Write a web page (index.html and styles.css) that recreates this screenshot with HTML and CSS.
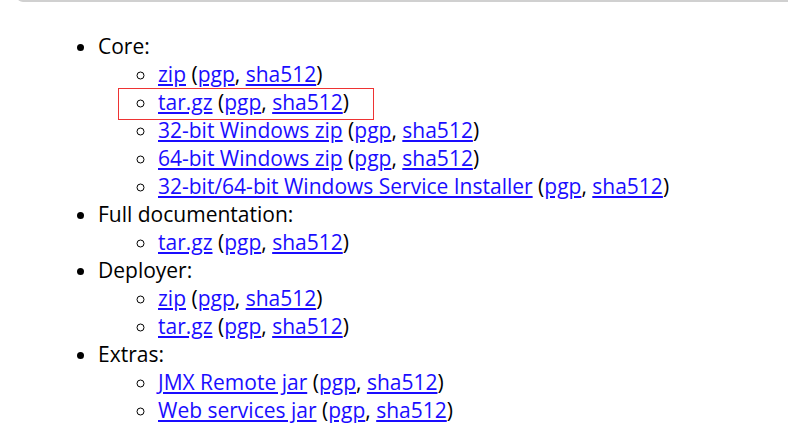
FILE: index.html
```html
<!DOCTYPE html>
<html>
<head>
<meta charset="utf-8">
<link rel="stylesheet" href="styles.css">
</head>
<body>
<div class="panel"></div>
<ul class="outer">
  <li>Core:
    <ul class="inner">
      <li><a href="#">zip</a> (<a href="#">pgp</a>, <a href="#">sha512</a>)</li>
      <li class="marked"><a href="#">tar.gz</a> (<a href="#">pgp</a>, <a href="#">sha512</a>)<span class="highlight"></span></li>
      <li><a href="#">32-bit Windows zip</a> (<a href="#">pgp</a>, <a href="#">sha512</a>)</li>
      <li><a href="#">64-bit Windows zip</a> (<a href="#">pgp</a>, <a href="#">sha512</a>)</li>
      <li><a href="#">32-bit/64-bit Windows Service Installer</a> (<a href="#">pgp</a>, <a href="#">sha512</a>)</li>
    </ul>
  </li>
  <li>Full documentation:
    <ul class="inner">
      <li><a href="#">tar.gz</a> (<a href="#">pgp</a>, <a href="#">sha512</a>)</li>
    </ul>
  </li>
  <li>Deployer:
    <ul class="inner">
      <li><a href="#">zip</a> (<a href="#">pgp</a>, <a href="#">sha512</a>)</li>
      <li><a href="#">tar.gz</a> (<a href="#">pgp</a>, <a href="#">sha512</a>)</li>
    </ul>
  </li>
  <li>Extras:
    <ul class="inner">
      <li><a href="#">JMX Remote jar</a> (<a href="#">pgp</a>, <a href="#">sha512</a>)</li>
      <li><a href="#">Web services jar</a> (<a href="#">pgp</a>, <a href="#">sha512</a>)</li>
    </ul>
  </li>
</ul>
</body>
</html>
```
FILE: styles.css
```css
html, body {
  margin: 0;
  padding: 0;
  background: #fff;
  overflow: hidden;
}
body {
  font-family: "Open Sans", "Liberation Sans", sans-serif;
  font-size: 21px;
  line-height: 28px;
  color: #000;
}
.panel {
  margin: -30px 0 0 17px;
  height: 30px;
  border: 2px solid #d0d0d0;
  border-top: none;
  border-right: none;
  border-bottom-left-radius: 6px;
}
.outer {
  margin: 30px 0 0 0;
  padding: 0 0 0 98px;
  list-style: disc;
}
.inner {
  margin: 0;
  padding: 0 0 0 60px;
  list-style: circle;
}
a {
  color: #1a0dff;
  text-decoration: underline;
}
.marked {
  position: relative;
}
.highlight {
  position: absolute;
  left: -40px;
  top: 0;
  width: 256px;
  height: 32px;
  box-sizing: border-box;
  border: 1px solid #ee3333;
  pointer-events: none;
}
```
